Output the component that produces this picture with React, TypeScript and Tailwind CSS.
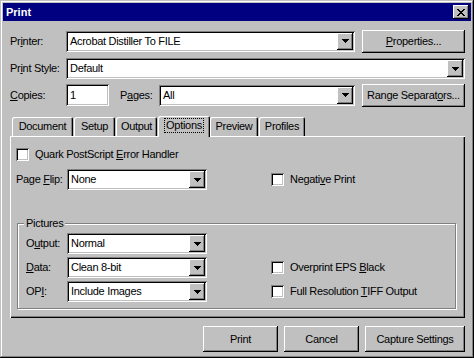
import { ReactNode } from 'react'

const raised = 'shadow-[inset_-1px_-1px_#000000,inset_1px_1px_#ffffff,inset_-2px_-2px_#808080]'
const sunken = 'shadow-[inset_1px_1px_#808080,inset_-1px_-1px_#ffffff,inset_2px_2px_#000000,inset_-2px_-2px_#c0c0c0]'

function DropButton() {
  return (
    <div className={`flex h-[17px] w-[16px] shrink-0 items-center justify-center bg-[#c0c0c0] ${raised}`}>
      <svg width="7" height="4" viewBox="0 0 7 4" shapeRendering="crispEdges">
        <rect x="0" y="0" width="7" height="1" fill="#000" />
        <rect x="1" y="1" width="5" height="1" fill="#000" />
        <rect x="2" y="2" width="3" height="1" fill="#000" />
        <rect x="3" y="3" width="1" height="1" fill="#000" />
      </svg>
    </div>
  )
}

function Combo({ value, className }: { value: string; className: string }) {
  return (
    <div className={`flex h-[21px] shrink-0 items-center bg-white p-[2px] ${sunken} ${className}`}>
      <span className="flex-1 truncate pl-[2px]">{value}</span>
      <DropButton />
    </div>
  )
}

function Button({ children, className }: { children: ReactNode; className: string }) {
  return (
    <div className={`flex shrink-0 items-center justify-center bg-[#c0c0c0] ${raised} ${className}`}>{children}</div>
  )
}

function Check({ children }: { children: ReactNode }) {
  return (
    <div className="flex items-center">
      <div className={`h-[13px] w-[13px] shrink-0 bg-white ${sunken}`} />
      <span className="ml-[6px]">{children}</span>
    </div>
  )
}

function Tab({ label, active, className }: { label: ReactNode; active?: boolean; className: string }) {
  if (active) {
    return (
      <div
        className={`relative z-10 -mb-px flex h-[21px] items-start justify-center rounded-t-[2px] bg-[#c0c0c0] pt-[2px] shadow-[inset_1px_1px_#ffffff,inset_-1px_0_#000000,inset_-2px_0_#808080] ${className}`}
      >
        <span className="border border-dotted border-black px-[1px] leading-[13px]">{label}</span>
      </div>
    )
  }
  return (
    <div
      className={`flex h-[19px] items-center justify-center rounded-t-[2px] shadow-[inset_1px_1px_#ffffff,inset_-1px_0_#000000,inset_-2px_0_#808080] ${className}`}
    >
      {label}
    </div>
  )
}

export default function App() {
  return (
    <div
      className="flex h-[358px] w-[474px] flex-col bg-[#c0c0c0] p-[3px] text-[11px] leading-none tracking-[-0.3px] text-black shadow-[inset_-1px_-1px_#000000,inset_1px_1px_#c0c0c0,inset_-2px_-2px_#808080,inset_2px_2px_#ffffff]"
      style={{ fontFamily: '"Liberation Sans", Arial, sans-serif' }}
    >
      <div className="flex h-[18px] shrink-0 items-center justify-between bg-[#000080] pl-[3px] pr-[2px]">
        <span className="text-[11px] font-bold tracking-normal text-white">Print</span>
        <div className={`flex h-[14px] w-[16px] items-center justify-center bg-[#c0c0c0] ${raised}`}>
          <svg width="8" height="7" viewBox="0 0 8 7" shapeRendering="crispEdges">
            <path d="M0 0h2v1h1v1h2v-1h1v-1h2v1h-1v1h-1v1h-1v1h1v1h1v1h1v1h-2v-1h-1v-1h-2v1h-1v1h-2v-1h1v-1h1v-1h1v-1h-1v-1h-1v-1h-1z" fill="#000" />
          </svg>
        </div>
      </div>

      <div className="flex flex-1 flex-col pl-[7px] pr-[6px]">
        <div className="mt-[8px] flex h-[24px] items-center">
          <span className="w-[56px] shrink-0">
            Pr<u>i</u>nter:
          </span>
          <Combo value="Acrobat Distiller To FILE" className="w-[289px]" />
          <Button className="ml-[7px] h-[23px] w-[103px]">
            <u>P</u>roperties...
          </Button>
        </div>

        <div className="mt-[5px] flex h-[21px] items-center">
          <span className="w-[56px] shrink-0">
            Pr<u>i</u>nt Style:
          </span>
          <Combo value="Default" className="flex-1" />
        </div>

        <div className="mt-[4px] flex h-[24px] items-center">
          <span className="w-[56px] shrink-0">
            <u>C</u>opies:
          </span>
          <div className={`flex h-[22px] w-[43px] shrink-0 items-center bg-white pl-[4px] ${sunken}`}>1</div>
          <span className="ml-[11px] w-[39px] shrink-0">
            P<u>a</u>ges:
          </span>
          <Combo value="All" className="w-[196px]" />
          <Button className="ml-[7px] h-[23px] w-[103px]">
            Range Separat<u>o</u>rs...
          </Button>
        </div>

        <div className="mt-[9px] flex h-[20px] items-end pl-[2px]">
          <Tab label="Document" className="w-[61px]" />
          <Tab label="Setup" className="ml-px w-[41px]" />
          <Tab label="Output" className="ml-px w-[41px]" />
          <Tab label="Options" active className="ml-px w-[52px]" />
          <Tab label="Preview" className="w-[48px]" />
          <Tab label="Profiles" className="ml-px w-[46px]" />
        </div>

        <div className="flex h-[182px] flex-col shadow-[inset_1px_1px_#ffffff,inset_-1px_-1px_#000000,inset_-2px_-2px_#808080]">
          <div className="ml-[6px] mt-[12px]">
            <Check>
              Quark PostScript <u>E</u>rror Handler
            </Check>
          </div>

          <div className="ml-[6px] mt-[8px] flex h-[21px] items-center">
            <span className="w-[51px] shrink-0">
              Page <u>F</u>lip:
            </span>
            <Combo value="None" className="w-[140px]" />
            <div className="ml-[64px]">
              <Check>
                Negati<u>v</u>e Print
              </Check>
            </div>
          </div>

          <div className="relative ml-[7px] mr-[9px] mt-[33px] h-[86px] border border-[#808080] pl-[8px] pt-[9px] shadow-[1px_1px_#ffffff,inset_1px_1px_#ffffff]">
            <span className="absolute left-[6px] top-[-6px] bg-[#c0c0c0] px-[2px]">Pictures</span>
            <div className="flex flex-col gap-[3px]">
              <div className="flex h-[21px] items-center">
                <span className="w-[41px] shrink-0">
                  O<u>u</u>tput:
                </span>
                <Combo value="Normal" className="w-[140px]" />
              </div>
              <div className="flex h-[21px] items-center">
                <span className="w-[41px] shrink-0">
                  <u>D</u>ata:
                </span>
                <Combo value="Clean 8-bit" className="w-[140px]" />
                <div className="ml-[64px]">
                  <Check>
                    Overprint EPS <u>B</u>lack
                  </Check>
                </div>
              </div>
              <div className="flex h-[21px] items-center">
                <span className="w-[41px] shrink-0">
                  OP<u>I</u>:
                </span>
                <Combo value="Include Images" className="w-[140px]" />
                <div className="ml-[64px]">
                  <Check>
                    Full Resolution <u>T</u>IFF Output
                  </Check>
                </div>
              </div>
            </div>
          </div>
        </div>

        <div className="mt-[8px] flex justify-end gap-[6px]">
          <Button className="h-[26px] w-[75px]">Print</Button>
          <Button className="h-[26px] w-[75px]">Cancel</Button>
          <Button className="h-[26px] w-[100px]">Capture Settings</Button>
        </div>
      </div>
    </div>
  )
}
